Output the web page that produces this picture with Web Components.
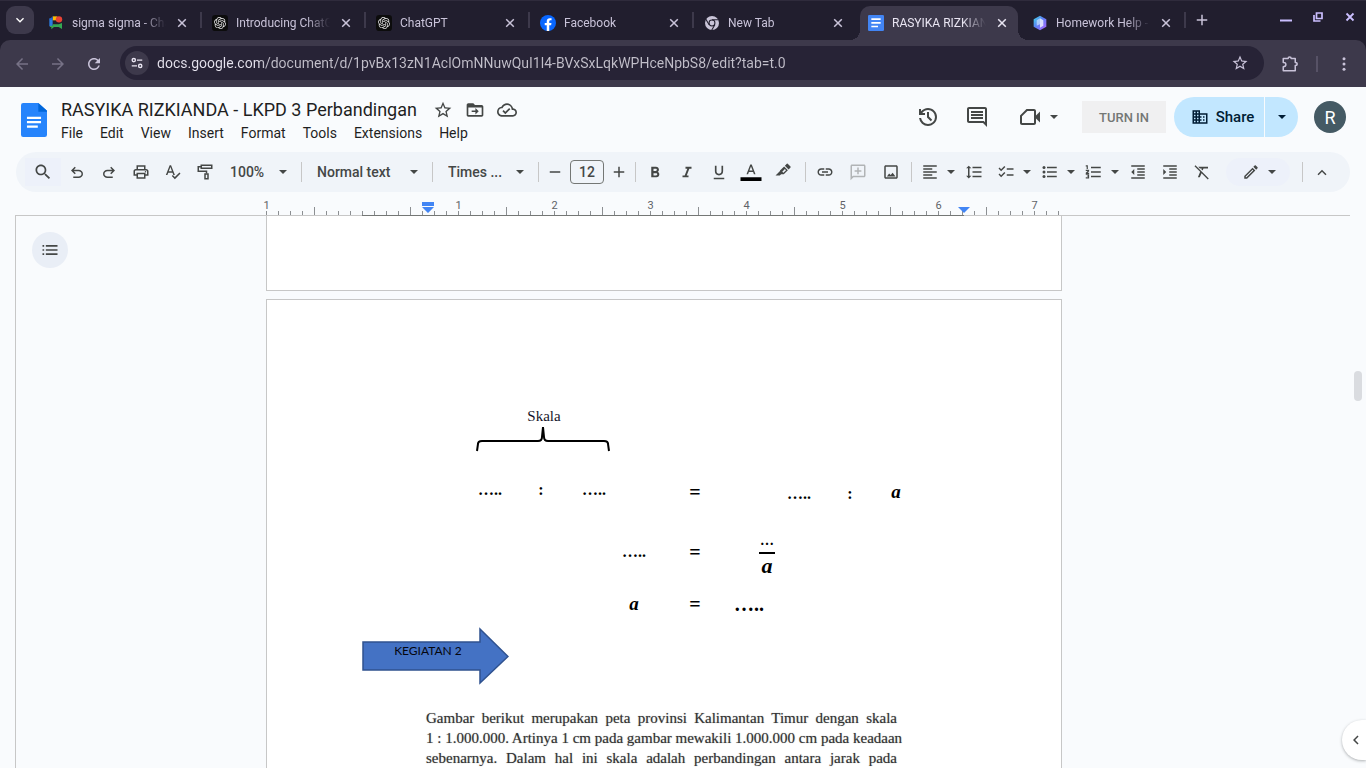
<!DOCTYPE html>
<html lang="en">
<head>
<meta charset="utf-8">
<title>RASYIKA RIZKIANDA - LKPD 3 Perbandingan</title>
<style>
  html, body { height: 100%; margin: 0; }
  body { overflow: hidden; font-family: Roboto, "Liberation Sans", sans-serif; color: #1f1f1f; background: #f9fbfd; }
</style>
</head>
<body>
<browser-window></browser-window>

<script>
const ICONS = {
  search: '<path d="M15.5 14h-.79l-.28-.27C15.41 12.59 16 11.11 16 9.5 16 5.91 13.09 3 9.5 3S3 5.91 3 9.5 5.91 16 9.5 16c1.61 0 3.09-.59 4.23-1.57l.27.28v.79l5 4.99L20.49 19l-4.99-5zm-6 0C7.01 14 5 11.99 5 9.5S7.01 5 9.5 5 14 7.01 14 9.5 11.99 14 9.5 14z"/>',
  undo: '<path d="M7 20v-2h7.1q1.575 0 2.737-1Q18 16 18 14.500T16.837 12 14.1 11H7.8l2.6 2.6L9 15 4 10l5-5 1.4 1.4L7.8 9h6.3q2.425 0 4.163 1.575Q20 12.15 20 14.500t-1.737 3.925Q16.525 20 14.1 20z"/>',
  redo: '<path transform="matrix(-1 0 0 1 24 0)" d="M7 20v-2h7.1q1.575 0 2.737-1Q18 16 18 14.500T16.837 12 14.1 11H7.8l2.6 2.6L9 15 4 10l5-5 1.4 1.4L7.8 9h6.3q2.425 0 4.163 1.575Q20 12.15 20 14.500t-1.737 3.925Q16.525 20 14.1 20z"/>',
  print: '<path d="M19 8h-1V3H6v5H5c-1.66 0-3 1.34-3 3v6h4v4h12v-4h4v-6c0-1.66-1.34-3-3-3zM8 5h8v3H8V5zm8 12v2H8v-4h8v2zm2-2v-2H6v2H4v-4c0-.55.45-1 1-1h14c.55 0 1 .45 1 1v4h-2z"/><circle cx="18" cy="11.5" r="1"/>',
  spell: '<path d="M12.45 16h2.09L9.43 3H7.57L2.46 16h2.09l1.12-3h5.64zM6.43 11 8.5 5.48 10.57 11zM20.6 12.6l-6.1 6.1-2.7-2.7-1.4 1.4 4.1 4.1 7.5-7.5z"/>',
  paint: '<g fill="none" stroke="currentColor" stroke-width="2"><path d="M7 3h14v4H7zM7 5H3v6h11v3"/><path d="M12 14.500h4V21h-4z"/></g>',
  minus: '<path d="M5 11h14v2H5z"/>',
  plus: '<path d="M5 11h6V5h2v6h6v2h-6v6h-2v-6H5z"/>',
  bold: '<path d="M15.6 11.79c.97-.67 1.65-1.77 1.65-2.79 0-2.26-1.75-4-4-4H7v14h7.04c2.09 0 3.71-1.7 3.71-3.79 0-1.52-.86-2.82-2.15-3.42zM10 7.500h3c.83 0 1.5.67 1.5 1.5s-.67 1.5-1.5 1.5h-3zm3.500 9H10v-3h3.500c.83 0 1.5.67 1.5 1.500s-.67 1.500-1.500 1.500z"/>',
  italic: '<path d="M10 5v2.500h2.400l-3.500 9H6V19h8v-2.500h-2.400l3.500-9H18V5z"/>',
  underline: '<path d="M12 16.500c3.31 0 5.500-2.400 5.500-5.500V3.500h-2.200V11c0 1.930-1.300 3.400-3.300 3.400S8.700 12.930 8.700 11V3.500H6.500V11c0 3.100 2.190 5.500 5.500 5.500zM5 19.500v2h14v-2z"/>',
  color: '<path d="M11 2 6 15h2.100l1.100-3h5.600l1.100 3H18L13 2zM9.900 10.100 12 4.500l2.100 5.600z"/><path fill="#000" d="M-2 19h28v5H-2z"/>',
  highlight: '<path fill-rule="evenodd" d="m14.500 3.500 2.600-2.500q.6-.5 1.200 0l3.700 3.700q.6.600 0 1.200l-2.500 2.600zM8 10l5.500-5.500 5 5L13 15H9.500l-1.800 1.800H2l6-6zm3 1.500L12.500 13l3.500-3.500L14.500 8z"/>',
  link: '<path d="M3.900 12c0-1.710 1.390-3.100 3.100-3.100h4V7H7c-2.760 0-5 2.240-5 5s2.240 5 5 5h4v-1.900H7c-1.710 0-3.100-1.390-3.100-3.100zM8 13h8v-2H8zm9-6h-4v1.900h4c1.710 0 3.100 1.390 3.100 3.100s-1.390 3.100-3.100 3.100h-4V17h4c2.760 0 5-2.240 5-5s-2.240-5-5-5z"/>',
  addcomment: '<path d="M4 2h16c1.100 0 2 .9 2 2v13c0 1.100-.9 2-2 2H6l-4 4V4c0-1.100.9-2 2-2zm0 2v14l1.200-1H20V4zm7 2h2v3.500h3.500v2H13V15h-2v-3.500H7.500v-2H11z"/>',
  image: '<path d="M19 5v14H5V5h14m0-2H5c-1.100 0-2 .9-2 2v14c0 1.100.9 2 2 2h14c1.100 0 2-.9 2-2V5c0-1.100-.9-2-2-2zm-4.860 9.860-2.500 3.200L9.500 14 6.500 18h11.500z"/>',
  align: '<path d="M15 15H3v2h12zm0-8H3v2h12zM3 13h18v-2H3zm0 8h18v-2H3zM3 3v2h18V3z"/>',
  spacing: '<path d="M6 7h2.500L5 3.500 1.500 7H4v10H1.500L5 20.500 8.500 17H6zm4-2v2h12V5zm0 14h12v-2H10zm0-6h12v-2H10z"/>',
  checklist: '<path d="M22 7h-9v2h9zm0 8h-9v2h9zM5.540 11 2 7.460l1.410-1.410 2.120 2.120 4.240-4.240 1.410 1.410zm0 8L2 15.460l1.410-1.410 2.120 2.120 4.240-4.240 1.410 1.410z"/>',
  bullets: '<circle cx="4" cy="6" r="2"/><circle cx="4" cy="12" r="2"/><circle cx="4" cy="18" r="2"/><path d="M8 19h13v-2H8zm0-6h13v-2H8zm0-8v2h13V5z"/>',
  numbers: '<path d="M1 16h3v.7H2.500v1.300H4v1H1v1.500h4.500V15H1zm1.200-8h1.600V3H1v1.500h1.200zM1 10.500h2.500L1 13v1.500h4.500V13H3.600l1.900-2V9H1zM8 5v2h13V5zm0 14h13v-2H8zm0-6h13v-2H8z"/>',
  outdent: '<path d="M11 17h10v-2H11zm-8-5 4 4V8zm0 9h18v-2H3zM3 3v2h18V3zm8 6h10V7H11zm0 4h10v-2H11z"/>',
  indent: '<path d="M3 21h18v-2H3zM3 8v8l4-4zm8 9h10v-2H11zM3 3v2h18V3zm8 6h10V7H11zm0 4h10v-2H11z"/>',
  clear: '<path d="M3.270 3 2 4.270l7.500 7.500L6.500 19h2.600l2.300-5.300L19.730 22 21 20.730zM7 5l2.200 2.200h2.400l-.5 1.200 1.700 1.700 1.200-2.900H20V5z"/>',
  pencil: '<path d="m14.060 9.020.92.92L5.920 19H5v-.92zM17.660 3c-.25 0-.51.1-.7.29l-1.830 1.830 3.750 3.750 1.830-1.830c.39-.39.39-1.020 0-1.410l-2.340-2.340c-.2-.2-.45-.29-.71-.29zm-3.600 3.190L3 17.250V21h3.750L17.810 9.940z"/>',
  up: '<path d="m12 9-6 6 1.410 1.410L12 11.830l4.590 4.580L18 15z"/>',
  down: '<path d="M7.410 8.590 12 13.170l4.590-4.580L18 10l-6 6-6-6z"/>',
  left: '<path d="M15.400 7.400 14 6l-6 6 6 6 1.400-1.400-4.600-4.600z"/>',
  caret: '<path d="m6 9 6 6 6-6z"/>',
  star: '<path d="m22 9.240-7.190-.62L12 2 9.190 8.630 2 9.240l5.460 4.730L5.820 21 12 17.270 18.180 21l-1.630-7.030zM12 15.400l-3.760 2.270 1-4.280-3.320-2.880 4.380-.38L12 6.100l1.710 4.040 4.380.38-3.320 2.880 1 4.280z"/>',
  move: '<path d="M20 6h-8l-2-2H4c-1.100 0-2 .9-2 2v12c0 1.100.9 2 2 2h16c1.100 0 2-.9 2-2V8c0-1.100-.9-2-2-2zm0 12H4V9h16zm-7.500-.5 4-4-4-4v3H8v2h4.500z"/>',
  cloud: '<path d="M19.350 10.040C18.670 6.590 15.640 4 12 4 9.110 4 6.600 5.640 5.350 8.040 2.340 8.360 0 10.910 0 14c0 3.310 2.690 6 6 6h13c2.760 0 5-2.240 5-5 0-2.640-2.050-4.780-4.650-4.960zM19 18H6c-2.210 0-4-1.790-4-4 0-2.050 1.530-3.760 3.560-3.970l1.070-.11.5-.95C8.080 7.140 9.940 6 12 6c2.620 0 4.880 1.860 5.390 4.430l.3 1.500 1.530.11c1.560.1 2.780 1.410 2.780 2.960 0 1.650-1.350 3-3 3zm-9-3.820-2.090-2.090L6.500 13.500 10 17l6.010-6.010-1.410-1.410z"/>',
  history: '<path d="M12 21q-3.450 0-6.012-2.288T3.050 13H5.100q.35 2.600 2.313 4.300T12 19q2.925 0 4.963-2.037T19 12t-2.037-4.962T12 5q-1.725 0-3.225.8T6.250 8H9v2H3V4h2v2.350q1.275-1.600 3.113-2.475T12 3q1.875 0 3.513.713t2.850 1.924 1.925 2.850T21 12t-.712 3.513-1.925 2.850-2.850 1.925T12 21m2.800-4.800L11 12.400V7h2v4.600l3.200 3.200z"/>',
  comment: '<path d="M22 4c0-1.100-.89-2-2-2H4c-1.100 0-2 .9-2 2v12c0 1.100.9 2 2 2h14l4 4zM20 4v13.170L18.830 16H4V4zM6 12h12v2H6zm0-3h12v2H6zm0-3h12v2H6z"/>',
  video: '<path d="M7.500 4H15c1.100 0 2 .9 2 2v4.500l4-4v11l-4-4V18c0 1.100-.9 2-2 2H3c-1.100 0-2-.9-2-2v-7.500zM8.400 6 3 11.300V18h12V6z"/>',
  business: '<path d="M12 7V3H2v18h20V7H12zM6 19H4v-2h2v2zm0-4H4v-2h2v2zm0-4H4V9h2v2zm0-4H4V5h2v2zm4 12H8v-2h2v2zm0-4H8v-2h2v2zm0-4H8V9h2v2zm0-4H8V5h2v2zm10 12h-8v-2h2v-2h-2v-2h2v-2h-2V9h8v10zm-2-8h-2v2h2v-2zm0 4h-2v2h2v-2z"/>',
  outline: '<path d="M3 6h2v2H3zm4 0h14v2H7zM3 11h2v2H3zm4 0h14v2H7zM3 16h2v2H3zm4 0h14v2H7z"/>',
  back: '<path d="M20 11H7.830l5.590-5.590L12 4l-8 8 8 8 1.410-1.410L7.830 13H20z"/>',
  forward: '<path d="M4 11h12.170l-5.590-5.590L12 4l8 8-8 8-1.410-1.410L16.170 13H4z"/>',
  refresh: '<path d="M17.650 6.350C16.200 4.900 14.210 4 12 4c-4.420 0-7.990 3.580-7.990 8s3.570 8 7.990 8c3.730 0 6.840-2.550 7.730-6h-2.080c-.82 2.330-3.040 4-5.650 4-3.310 0-6-2.690-6-6s2.690-6 6-6c1.660 0 3.140.69 4.220 1.780L13 11h7V4z"/>',
  tune: '<g fill="none" stroke="currentColor" stroke-width="2.400"><circle cx="6.500" cy="7" r="2.800"/><path d="M12 7h9M3 17h9"/><circle cx="17.500" cy="17" r="2.800"/></g>',
  close: '<path d="M5.500 5.500l13 13M18.500 5.500l-13 13" stroke="currentColor" stroke-width="2.600"/>',
  closebold: '<path d="M5 5l14 14M19 5 5 19" stroke="currentColor" stroke-width="3.600"/>',
  minimize: '<path d="M0 17h24v4H0z"/>',
  restore: '<path fill="none" stroke="currentColor" stroke-width="3.400" d="M9 4h11v11H9zM4 8v12H17"/>',
  puzzle: '<path fill="none" stroke="currentColor" stroke-width="2" stroke-linejoin="round" d="M3 4.500h6.500q0-2 2-2t2 2H19V10q2.500 0 2.500 2t-2.500 2v7H3v-5.500q3.500 0 3.500-2.800T3 10z"/>',
  more: '<circle cx="12" cy="5" r="2"/><circle cx="12" cy="12" r="2"/><circle cx="12" cy="19" r="2"/>',
  favmeet: '<path fill="#2a7de1" d="M2 5h5v12H2z"/><path fill="#fbbc04" d="M7 2h7v6H7z"/><path fill="#1f5fd0" d="m7 2-5 5h5z"/><path fill="#34a853" d="M7 14h9l5-2v9l-5-3H9l-4 3.500V18H3v-2h4z"/><circle cx="16.500" cy="6.500" r="4.800" fill="#ea4335"/>',
  favgpt: '<rect width="24" height="24" rx="5" fill="#0c0c0c"/><path fill="#e6e6e6" transform="translate(3 3) scale(.75)" d="M22.282 9.821a5.985 5.985 0 0 0-.516-4.911 6.046 6.046 0 0 0-6.510-2.900A6.065 6.065 0 0 0 4.981 4.182a5.985 5.985 0 0 0-3.998 2.900 6.046 6.046 0 0 0 .743 7.097 5.980 5.980 0 0 0 .511 4.911 6.051 6.051 0 0 0 6.515 2.900A5.985 5.985 0 0 0 13.260 24a6.056 6.056 0 0 0 5.772-4.206 5.989 5.989 0 0 0 3.998-2.900 6.056 6.056 0 0 0-.748-7.073zm-9.022 12.608a4.476 4.476 0 0 1-2.876-1.041l.142-.080 4.778-2.758a.795.795 0 0 0 .393-.681v-6.737l2.020 1.169a.071.071 0 0 1 .038.052v5.583a4.504 4.504 0 0 1-4.495 4.494zm-9.661-4.125a4.471 4.471 0 0 1-.535-3.014l.142.085 4.783 2.758a.771.771 0 0 0 .781 0l5.843-3.369v2.332a.080.080 0 0 1-.033.062L9.740 19.950a4.499 4.499 0 0 1-6.141-1.646zM2.341 7.896a4.485 4.485 0 0 1 2.366-1.973V11.600a.766.766 0 0 0 .388.677l5.814 3.354-2.020 1.169a.076.076 0 0 1-.071 0l-4.830-2.787A4.504 4.504 0 0 1 2.341 7.872zm16.596 3.856L13.104 8.364 15.119 7.200a.076.076 0 0 1 .071 0l4.830 2.791a4.494 4.494 0 0 1-.677 8.104v-5.677a.790.790 0 0 0-.407-.667zm2.011-3.023-.142-.085-4.774-2.782a.776.776 0 0 0-.785 0L9.409 9.230V6.897a.066.066 0 0 1 .028-.062l4.830-2.787a4.499 4.499 0 0 1 6.680 4.660zM8.307 12.863l-2.020-1.164a.080.080 0 0 1-.038-.057V6.074a4.499 4.499 0 0 1 7.376-3.454l-.142.081L8.704 5.459a.795.795 0 0 0-.393.681zm1.098-2.365 2.602-1.500 2.607 1.500v2.999l-2.597 1.500-2.607-1.500z"/>',
  favfacebook: '<circle cx="12" cy="12" r="12" fill="#0866ff"/><path fill="#fff" d="m16.670 15.500.53-3.470h-3.330V9.790c0-.95.47-1.870 1.960-1.870h1.510V4.970s-1.370-.23-2.680-.23c-2.740 0-4.530 1.660-4.530 4.660v2.630H7.080v3.470h3.050V24h3.750v-8.500z"/>',
  favchrome: '<circle cx="12" cy="12" r="10.500" fill="#c9c4d8"/><circle cx="12" cy="12" r="5.200" fill="#211e2e"/><circle cx="12" cy="12" r="3.600" fill="#c9c4d8"/><path fill="none" stroke="#211e2e" stroke-width="1.600" d="M12 7h10M7.700 14.500 2.600 6M16.300 14.500 11.500 23"/>',
  favdocs: '<rect width="24" height="24" rx="2" fill="#4285f4"/><path fill="#fff" d="M5 5h14v2.500H5zm0 5.500h14V13H5zM5 16h10v2.500H5z"/>',
  favhex: '<defs><linearGradient id="h" x1="0" y1="0" x2="1" y2="1"><stop offset="0" stop-color="#3fe0e8"/><stop offset=".45" stop-color="#5b7ff5"/><stop offset="1" stop-color="#b566ff"/></linearGradient></defs><path fill="url(#h)" d="m12 1 9.500 5.500v11L12 23l-9.500-5.500v-11z"/><path fill="#fff" opacity=".75" d="m12 5 5 3v8l-5 3z"/><path fill="#dff6ff" opacity=".6" d="m12 5-5 3v8l5-2z"/>',
  docslogo: '<path fill="#2684fc" d="M2 0h14l8 7v22a2 2 0 0 1-2 2H2a2 2 0 0 1-2-2V2a2 2 0 0 1 2-2z"/><path fill="#0066da" d="m16 0 8 7v1h-8z"/><path fill="#fff" d="M5.500 12.500h13v2h-13zm0 4h13v2h-13zm0 4h10v2h-10z"/>',
};

class UiIcon extends HTMLElement {
  connectedCallback() {
    const root = this.attachShadow({ mode: 'open' });
    const box = this.getAttribute('box') || '0 0 24 24';
    root.innerHTML = `<style>
      :host { display: block; flex: none; width: var(--icon, 20px); height: var(--icon-h, var(--icon, 20px)); }
      svg { display: block; width: 100%; height: 100%; fill: currentColor; overflow: visible; }
    </style><svg viewBox="${box}" preserveAspectRatio="none" aria-hidden="true">${ICONS[this.getAttribute('name')]}</svg>`;
  }
}

class BrowserTab extends HTMLElement {
  connectedCallback() {
    const root = this.attachShadow({ mode: 'open' });
    root.innerHTML = `<style>
      :host { display: flex; flex: 0 1 164px; min-width: 0; height: 34px; align-items: center; box-sizing: border-box;
        padding: 0 10px 0 12px; position: relative; color: #c9c3d9; font-size: 12px; line-height: 16px; --icon: 16px; }
      :host([active]) { color: #e9e5f2; }
      :host([active]) .shape { position: absolute; inset: 0 2px 0 4px; background: #3d394b; border-radius: 10px 10px 0 0; }
      :host([active]) .shape::before, :host([active]) .shape::after { content: ""; position: absolute; bottom: 0; width: 10px; height: 10px; }
      :host([active]) .shape::before { right: 100%; background: radial-gradient(circle at 0 0, #211e2e 10px, #3d394b 10px); }
      :host([active]) .shape::after { left: 100%; background: radial-gradient(circle at 100% 0, #211e2e 10px, #3d394b 10px); }
      :host([rule])::after { content: ""; position: absolute; right: -2px; top: 6px; width: 2px; height: 16px; background: #3d394b; }
      ui-icon, span, button { position: relative; }
      span { flex: 1; min-width: 0; margin: 0 8px; overflow: hidden; white-space: nowrap;
        mask-image: linear-gradient(90deg, #000 calc(100% - 24px), transparent); }
      button { all: unset; position: relative; display: flex; width: 16px; justify-content: center; --icon: 14px; }
    </style><div class="shape"></div><ui-icon name="${this.getAttribute('icon')}"></ui-icon><span><slot></slot></span>
    <button aria-label="Close tab"><ui-icon name="close"></ui-icon></button>`;
  }
}

class BrowserChrome extends HTMLElement {
  connectedCallback() {
    const root = this.attachShadow({ mode: 'open' });
    root.innerHTML = `<style>
      :host { display: block; background: #211e2e; color: #c9c3d9; }
      button { all: unset; display: flex; align-items: center; justify-content: center; }
      .strip { display: flex; align-items: stretch; height: 40px; box-sizing: border-box; padding: 5px 0 0 6px; border-top: 1px solid #2f2b3c; }
      .list { width: 28px; height: 28px; border-radius: 9px; background: #3d394b; color: #fff; --icon: 16px; margin-right: 2px; }
      .tabs { display: flex; flex: 0 1 1150px; min-width: 0; height: 34px; }
      .new { width: 32px; height: 28px; --icon: 18px; }
      .win { display: flex; margin-left: auto; height: 22px; color: #cbbfff; --icon: 12px; }
      .win button { width: 32px; }
      .bar { display: flex; align-items: center; height: 47px; box-sizing: border-box; padding: 0 4px; background: #3d394b; border-radius: 10px 10px 0 0; --icon: 18px; }
      .bar > button { width: 36px; height: 32px; }
      .off { color: #777286; }
      .box { display: flex; flex: 1; align-items: center; height: 34px; margin: 0 8px 1px; padding: 0 15px 0 5px; border-radius: 17px; background: #272336; }
      .site { width: 24px; height: 24px; border-radius: 12px; background: #3d394b; color: #e9e5f2; --icon: 14px; }
      input { flex: 1; min-width: 0; margin: 0 8px; padding: 0; border: 0; outline: 0; font: 14px/20px Roboto, sans-serif;
        color: transparent; background: linear-gradient(90deg, #e6e3ee 104px, #c2bfca 104px); -webkit-background-clip: text; background-clip: text; }
      .rule { width: 2px; height: 16px; margin: 0 8px; background: #575266; }
    </style>
    <div class="strip">
      <button class="list" aria-label="Search tabs"><ui-icon name="down"></ui-icon></button>
      <div class="tabs">
        <browser-tab icon="favmeet" rule>sigma sigma - Chat</browser-tab>
        <browser-tab icon="favgpt" rule>Introducing ChatGPT</browser-tab>
        <browser-tab icon="favgpt" rule>ChatGPT</browser-tab>
        <browser-tab icon="favfacebook" rule>Facebook</browser-tab>
        <browser-tab icon="favchrome">New Tab</browser-tab>
        <browser-tab icon="favdocs" active>RASYIKA RIZKIANDA</browser-tab>
        <browser-tab icon="favhex" rule>Homework Help - AI</browser-tab>
      </div>
      <button class="new" aria-label="New tab"><ui-icon name="plus"></ui-icon></button>
      <div class="win">
        <button aria-label="Minimize"><ui-icon name="minimize"></ui-icon></button>
        <button aria-label="Restore"><ui-icon name="restore"></ui-icon></button>
        <button aria-label="Close"><ui-icon name="closebold"></ui-icon></button>
      </div>
    </div>
    <div class="bar">
      <button class="off" aria-label="Back"><ui-icon name="back"></ui-icon></button>
      <button class="off" aria-label="Forward"><ui-icon name="forward"></ui-icon></button>
      <button aria-label="Reload"><ui-icon name="refresh"></ui-icon></button>
      <div class="box">
        <button class="site" aria-label="Site information"><ui-icon name="tune"></ui-icon></button>
        <input aria-label="Address" value="docs.google.com/document/d/1pvBx13zN1AclOmNNuwQuI1l4-BVxSxLqkWPHceNpbS8/edit?tab=t.0">
        <button aria-label="Bookmark"><ui-icon name="star"></ui-icon></button>
      </div>
      <button aria-label="Extensions"><ui-icon name="puzzle"></ui-icon></button>
      <span class="rule"></span>
      <button aria-label="Menu"><ui-icon name="more"></ui-icon></button>
    </div>`;
  }
}

class DocsHeader extends HTMLElement {
  connectedCallback() {
    const root = this.attachShadow({ mode: 'open' });
    root.innerHTML = `<style>
      :host { display: flex; height: 65px; box-sizing: border-box; padding: 0 20px; color: #444746; }
      button { all: unset; display: flex; align-items: center; justify-content: center; }
      .logo { margin: 16px 14px 0 1px; --icon: 26px; --icon-h: 34px; }
      .name { padding-top: 11px; }
      .title { display: flex; align-items: center; height: 24px; gap: 12px; --icon: 20px; }
      h1 { margin: 0 4px 0 0; font-size: 18px; font-weight: 400; line-height: 24px; color: #1f1f1f; white-space: nowrap; }
      nav { display: flex; height: 22px; gap: 17px; }
      nav button { font-size: 14px; line-height: 22px; color: #1f1f1f; }
      .right { display: flex; margin: 10px 0 0 auto; height: 40px; align-items: center; }
      .tool { width: 40px; margin-right: 9px; --icon: 24px; }
      .meet { width: 59px; margin: 0 12px 0 5px; gap: 3px; --icon: 24px; }
      .meet ui-icon + ui-icon { --icon: 16px; }
      .turn { width: 84px; height: 32px; background: #f0f0f1; color: #747775; font-size: 13px; font-weight: 500; }
      .share { display: flex; height: 40px; margin: 0 16px 0 8px; color: #001d35; }
      .share button { background: #c2e7ff; }
      .main { box-sizing: border-box; width: 90px; padding-left: 7px; gap: 7px; border-radius: 20px 0 0 20px; font-size: 15px; font-weight: 500; --icon: 18px; }
      .more { width: 33px; margin-left: 1px; border-radius: 0 20px 20px 0; --icon: 16px; }
      .me { width: 32px; height: 32px; border-radius: 16px; background: #455a64; color: #fff; font-size: 18px; }
    </style>
    <ui-icon class="logo" name="docslogo" box="0 0 24 31"></ui-icon>
    <div class="name">
      <div class="title"><h1>RASYIKA RIZKIANDA - LKPD 3 Perbandingan</h1>
        <button aria-label="Star"><ui-icon name="star"></ui-icon></button>
        <button aria-label="Move"><ui-icon name="move"></ui-icon></button>
        <button aria-label="Saved to Drive"><ui-icon name="cloud"></ui-icon></button></div>
      <nav>${['File', 'Edit', 'View', 'Insert', 'Format', 'Tools', 'Extensions', 'Help'].map(t => `<button>${t}</button>`).join('')}</nav>
    </div>
    <div class="right">
      <button class="tool" aria-label="Version history"><ui-icon name="history"></ui-icon></button>
      <button class="tool" aria-label="Comments"><ui-icon name="comment"></ui-icon></button>
      <button class="meet" aria-label="Join a call"><ui-icon name="video"></ui-icon><ui-icon name="caret"></ui-icon></button>
      <button class="turn">TURN IN</button>
      <div class="share"><button class="main"><ui-icon name="business"></ui-icon>Share</button><button class="more" aria-label="Share options"><ui-icon name="caret"></ui-icon></button></div>
      <button class="me" aria-label="Account">R</button>
    </div>`;
  }
}

class DocsToolbar extends HTMLElement {
  connectedCallback() {
    const root = this.attachShadow({ mode: 'open' });
    const b = (name, label) => `<button aria-label="${label}"><ui-icon name="${name}"></ui-icon></button>`;
    const split = (name, label) => `<button class="split" aria-label="${label}"><ui-icon name="${name}"></ui-icon><ui-icon class="c" name="caret"></ui-icon></button>`;
    const pick = (cls, label, text) => `<label class="pick ${cls}"><select aria-label="${label}"><option>${text}</option></select><ui-icon class="c" name="caret"></ui-icon></label>`;
    root.innerHTML = `<style>
      :host { display: flex; align-items: center; height: 40px; margin: 0 16px; padding: 0 12px 0 9px; border-radius: 20px; background: #f0f4f9; color: #444746; --icon: 18px; }
      button { all: unset; display: flex; flex: none; align-items: center; justify-content: center; width: 32px; height: 28px; }
      .find { width: 36px; background: #edf1fa; --icon: 20px; }
      .c { --icon: 16px; }
      .split { width: 44px; justify-content: flex-start; padding-left: 7px; box-sizing: border-box; gap: 4px; }
      i { flex: none; width: 1px; height: 20px; margin: 0 6px; background: #c7c7c7; }
      .group { display: flex; }
      .pick { display: flex; flex: none; align-items: center; box-sizing: border-box; padding: 0 4px 0 9px; }
      select { all: unset; flex: 1; min-width: 0; font-size: 14px; line-height: 20px; font-weight: 500; color: #444746; white-space: nowrap; }
      .zoom { width: 74px; } .style { width: 118px; } .font { width: 93px; }
      .step { width: 20px; --icon: 18px; }
      input { flex: none; box-sizing: border-box; width: 34px; height: 24px; margin: 0 5px; padding: 0; border: 1px solid #747775; border-radius: 4px;
        background: none; text-align: center; font: 500 14px/20px Roboto, sans-serif; color: #444746; }
      .format { margin-left: -3px; }
      .insert { gap: 1px; margin: 0 -2px 0 -3px; }
      .para { margin-left: -4px; }
      .faded { color: #b1b4b6; }
      .mode { display: flex; box-sizing: border-box; width: 64px; padding-left: 5px; margin: 0 6px 0 auto; border-radius: 14px; background: #edf1fa; gap: 4px; }
      .end { margin-left: -3px; }
    </style>
    <button class="find" aria-label="Search the menus"><ui-icon name="search"></ui-icon></button>
    ${b('undo', 'Undo')}${b('redo', 'Redo')}${b('print', 'Print')}${b('spell', 'Spelling')}${b('paint', 'Paint format')}
    ${pick('zoom', 'Zoom', '100%')}<i></i>${pick('style', 'Styles', 'Normal text')}<i></i>${pick('font', 'Font', 'Times ...')}<i></i>
    <button class="step" aria-label="Decrease font size"><ui-icon name="minus"></ui-icon></button>
    <input aria-label="Font size" value="12">
    <button class="step" aria-label="Increase font size"><ui-icon name="plus"></ui-icon></button><i></i>
    <div class="group format">${b('bold', 'Bold')}${b('italic', 'Italic')}${b('underline', 'Underline')}${b('color', 'Text color')}${b('highlight', 'Highlight color')}</div><i></i>
    <div class="group insert">${b('link', 'Insert link')}<span class="faded">${b('addcomment', 'Add comment')}</span>${b('image', 'Insert image')}</div><i></i>
    <div class="group para">${split('align', 'Align')}${b('spacing', 'Line spacing')}${split('checklist', 'Checklist')}${split('bullets', 'Bulleted list')}${split('numbers', 'Numbered list')}${b('outdent', 'Decrease indent')}${b('indent', 'Increase indent')}${b('clear', 'Clear formatting')}</div>
    <button class="mode" aria-label="Editing mode"><ui-icon name="pencil"></ui-icon><ui-icon class="c" name="caret"></ui-icon></button><i></i>
    <div class="end">${b('up', 'Hide the menus')}</div>`;
  }
}

class DocsRuler extends HTMLElement {
  connectedCallback() {
    const root = this.attachShadow({ mode: 'open' });
    const labels = ['1', '', '1', '2', '3', '4', '5', '6', '7'];
    root.innerHTML = `<style>
      :host { display: block; height: 23px; margin: 0 16px 0 15px; padding-right: 38px; border-bottom: 1px solid #c7c7c7; }
      .scale { position: relative; width: 796px; height: 23px; margin: 0 auto; display: flex; flex-direction: column; justify-content: flex-end; }
      .nums { display: flex; margin: 0 -21px -1px -47px; font-size: 11px; line-height: 12px; color: #5f6368; }
      .nums span { flex: none; width: 96px; text-align: center; }
      .ticks { display: flex; align-items: flex-end; height: 4px; }
      .ticks span { flex: none; width: 11px; height: 4px; border-left: 1px solid #8c8f92; }
      .ticks span:nth-child(8n+5) { height: 8px; }
      .active { position: absolute; left: 96px; right: 98px; bottom: -1px; height: 1px; background: #747775; }
      svg { position: absolute; bottom: 2px; width: 12px; height: 12px; fill: #4285f4; }
      .l { left: 156px; } .r { left: 692px; }
    </style>
    <div class="scale">
      <div class="nums">${labels.map(t => `<span>${t}</span>`).join('')}</div>
      <div class="ticks">${'<span></span>'.repeat(67)}</div>
      <div class="active"></div>
      <svg class="l" viewBox="0 0 12 12"><path d="M0 1h12v4H0zM0 6h12l-6 6z"/></svg>
      <svg class="r" viewBox="0 0 12 12"><path d="M0 6h12l-6 6z"/></svg>
    </div>`;
  }
}

class DocsPage extends HTMLElement {
  connectedCallback() {
    this.attachShadow({ mode: 'open' }).innerHTML = `<style>
      :host { display: block; flex: none; box-sizing: border-box; width: 796px; min-height: 75px; margin: 0 auto 8px; padding: 0 95px; background: #fff; border: 1px solid #c7c7c7; }
      :host([tail]) { border-top: 0; }
      :host([full]) { min-height: 1123px; padding-top: 106px; }
    </style><slot></slot>`;
  }
}

class ScaleWorksheet extends HTMLElement {
  connectedCallback() {
    this.attachShadow({ mode: 'open' }).innerHTML = `<style>
      :host { display: block; font-family: "Liberation Serif", serif; color: #000; }
      .skala { width: 134px; margin-left: 114px; text-align: center; font-size: 15px; line-height: 20px; color: #15152a; }
      .skala span { display: block; padding-left: 2px; }
      .skala svg { display: block; width: 134px; height: 26px; }
      .row { display: grid; align-items: center; text-align: center; font-weight: 700; font-size: 16px; line-height: 20px; }
      .one { margin: 14px 0 0 102px; height: 52px; grid-template-columns: 52px 50px 56px 146px 62px 40px 52px; }
      .two, .three { margin-left: 242px; grid-template-columns: 60px 62px 82px; }
      .two { height: 68px; }
      .three { height: 36px; }
      .high { padding-bottom: 4px; }
      .low { padding-top: 4px; }
      .eq { font-size: 20px; }
      .var { font-style: italic; font-size: 19px; }
      .big { font-size: 20px; text-align: left; padding-left: 8px; }
      .frac { display: grid; justify-items: center; padding-top: 7px; }
      .frac span { width: 16px; border-bottom: 2px solid #000; font-size: 14px; line-height: 16px; height: 19px; }
      .frac em { font-size: 22px; line-height: 24px; }
      .arrow { display: grid; width: 147px; height: 58px; margin-top: 5px; }
      .arrow > * { grid-area: 1 / 1; }
      .arrow svg { width: 147px; height: 58px; }
      .arrow span { padding: 14px 15px 0 0; text-align: center; font: 12px/20px Lato, sans-serif; color: #05060f; }
      p { margin: 23px 0 0 64px; width: 471px; font-size: 15px; line-height: 20px; color: #333; text-shadow: 0 0 1px rgba(50, 50, 50, .5); }
      p span { display: block; white-space: nowrap; text-align: justify; text-align-last: justify; }
    </style>
    <div class="skala"><span>Skala</span><svg viewBox="0 0 134 26" fill="none" stroke="#000" stroke-width="2"><path d="M1 25l1-7q0-3 4-3h56q4 0 4-4l1-10 1 10q0 4 4 4h56q4 0 4 3l1 7"/></svg></div>
    <div class="row one"><span class="high">…..</span><span class="high">:</span><span class="high">…..</span><span class="eq">=</span><span class="low">…..</span><span class="low">:</span><span class="var">a</span></div>
    <div class="row two"><span>…..</span><span class="eq">=</span><div class="frac"><span>…</span><em>a</em></div></div>
    <div class="row three"><span class="var">a</span><span class="eq">=</span><span class="big">…..</span></div>
    <div class="arrow"><svg viewBox="0 0 147 58"><path fill="#4472c4" stroke="#2f528f" stroke-width="1.500" d="M1 15h117V2l28 27.500L118 56V43H1z"/></svg><span>KEGIATAN 2</span></div>
    <p><span>Gambar berikut merupakan peta provinsi Kalimantan Timur dengan skala</span><span>1 : 1.000.000. Artinya 1 cm pada gambar mewakili 1.000.000 cm pada keadaan</span><span>sebenarnya. Dalam hal ini skala adalah perbandingan antara jarak pada</span></p>`;
  }
}

class DocsWorkspace extends HTMLElement {
  connectedCallback() {
    this.attachShadow({ mode: 'open' }).innerHTML = `<style>
      :host { display: block; position: relative; flex: 1; min-height: 0; overflow: hidden; }
      .scroll { height: 100%; margin-left: 15px; padding-right: 54px; border-left: 1px solid #c7c7c7; }
      button { all: unset; position: absolute; display: flex; align-items: center; justify-content: center; color: #444746; }
      .outline { left: 32px; top: 16px; width: 36px; height: 36px; border-radius: 18px; background: #e9eef6; --icon: 20px; }
      .thumb { position: absolute; right: 4px; top: 155px; width: 8px; height: 30px; border-radius: 4px; background: #dadce0; }
      .panel { box-sizing: border-box; right: 0; bottom: 8px; width: 24px; height: 40px; padding-left: 4px; border-radius: 20px 0 0 20px; background: #fff; box-shadow: 0 1px 3px rgba(60,64,67,.4); --icon: 18px; }
    </style>
    <div class="scroll"><docs-page tail></docs-page><docs-page full><scale-worksheet></scale-worksheet></docs-page></div>
    <button class="outline" aria-label="Show outline"><ui-icon name="outline"></ui-icon></button>
    <div class="thumb"></div>
    <button class="panel" aria-label="Show side panel"><ui-icon name="left"></ui-icon></button>`;
  }
}

class BrowserWindow extends HTMLElement {
  connectedCallback() {
    this.attachShadow({ mode: 'open' }).innerHTML = `<style>
      :host { display: flex; flex-direction: column; height: 100vh; overflow: hidden; background: #f9fbfd; }
    </style>
    <browser-chrome></browser-chrome><docs-header></docs-header><docs-toolbar></docs-toolbar><docs-ruler></docs-ruler><docs-workspace></docs-workspace>`;
  }
}

customElements.define('ui-icon', UiIcon);
customElements.define('browser-tab', BrowserTab);
customElements.define('browser-chrome', BrowserChrome);
customElements.define('docs-header', DocsHeader);
customElements.define('docs-toolbar', DocsToolbar);
customElements.define('docs-ruler', DocsRuler);
customElements.define('docs-page', DocsPage);
customElements.define('scale-worksheet', ScaleWorksheet);
customElements.define('docs-workspace', DocsWorkspace);
customElements.define('browser-window', BrowserWindow);
</script>
</body>
</html>
